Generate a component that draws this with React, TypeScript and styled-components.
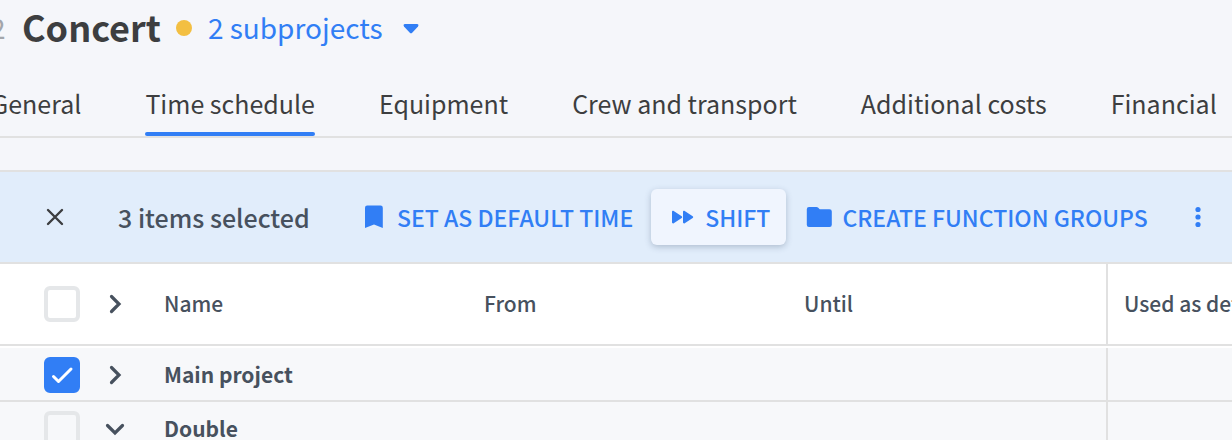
import React from "react";
import styled, { createGlobalStyle } from "styled-components";

const color = {
  page: "#f5f6fa",
  line: "#e1e1e1",
  ink: "#3d3e40",
  slate: "#47515e",
  blue: "#317ef5",
  bar: "#e1edfb",
  row: "#f7f8fa",
};

const GlobalStyle = createGlobalStyle`
  *, *::before, *::after { box-sizing: border-box; }
  body {
    margin: 0;
    background: ${color.page};
    color: ${color.ink};
    font-family: "Noto Sans CJK JP", "Noto Sans", sans-serif;
    -webkit-font-smoothing: antialiased;
  }
  button { font: inherit; color: inherit; background: none; border: 0; padding: 0; cursor: pointer; }
`;

const Page = styled.main`
  height: 100vh;
  overflow: hidden;
`;

const Header = styled.header`
  display: flex;
  align-items: center;
  height: 54px;
  margin-left: -10px;
  white-space: nowrap;
`;

const ProjectNumber = styled.span`
  width: 32px;
  font-size: 28px;
  line-height: 40px;
  color: #a3a6ab;
`;

const Title = styled.h1`
  margin: 0 0 2px;
  font-size: 36px;
  line-height: 48px;
  font-weight: 700;
`;

const StatusDot = styled.span`
  width: 16px;
  height: 16px;
  margin: 2px 16px 0 15px;
  border-radius: 50%;
  background: #f3bf42;
`;

const SubprojectsButton = styled.button`
  display: flex;
  align-items: center;
  gap: 20px;
  font-size: 28px;
  line-height: 40px;
  color: ${color.blue};

  svg { margin-top: 4px; }
`;

const Tabs = styled.nav`
  display: flex;
  gap: 64px;
  margin-left: -9px;
  padding-top: 32px;
  border-bottom: 2px solid ${color.line};
  white-space: nowrap;
`;

const Tab = styled.a<{ $active?: boolean }>`
  font-size: 25px;
  line-height: 34px;
  color: inherit;
  text-decoration: none;

  &::after {
    content: "";
    display: block;
    height: 4px;
    margin-top: 12px;
    border-radius: 2px;
    background: ${(p) => (p.$active ? color.blue : "transparent")};
  }
`;

const SelectionBar = styled.section`
  display: flex;
  align-items: center;
  height: 94px;
  margin-top: 32px;
  border: solid ${color.line};
  border-width: 2px 0;
  background: ${color.bar};
  white-space: nowrap;
`;

const CloseButton = styled.button`
  display: grid;
  place-items: center;
  width: 110px;
  height: 56px;
`;

const SelectedCount = styled.p`
  width: 225px;
  margin: 0 0 0 8px;
  font-size: 25px;
  line-height: 34px;
  font-weight: 500;
  color: ${color.slate};
`;

const Actions = styled.div`
  display: flex;
  align-items: center;
  gap: 2px;
`;

const ActionButton = styled.button<{ $raised?: boolean }>`
  display: flex;
  align-items: center;
  gap: 8px;
  height: 56px;
  && { padding: 0 16px; }
  border-radius: 6px;
  font-size: 23px;
  line-height: 34px;
  font-weight: 500;
  color: ${color.blue};
  ${(p) =>
    p.$raised &&
    `&& { background: #f0f5fe; }
     box-shadow: 0 2px 6px rgba(60, 80, 110, 0.3);`}
`;

const MoreButton = styled.button`
  display: grid;
  place-items: center;
  width: 64px;
  height: 56px;
  color: ${color.blue};
`;

const TableScroller = styled.div`
  overflow: hidden;
  background: #fff;
`;

const Table = styled.table`
  width: 100%;
  min-width: 1428px;
  table-layout: fixed;
  border-collapse: separate;
  border-spacing: 0;
  font-size: 21px;
  line-height: 32px;
  color: ${color.slate};
  text-align: left;
  white-space: nowrap;
`;

const Col = styled.col<{ $width?: number }>`
  width: ${(p) => (p.$width ? `${p.$width}px` : "auto")};
`;

const HeadCell = styled.th<{ $divider?: boolean }>`
  height: 82px;
  padding: 0 16px 2px;
  border-bottom: 2px solid ${color.line};
  border-right: ${(p) => (p.$divider ? `2px solid ${color.line}` : "0")};
  font-weight: 500;

  &:first-child { padding-bottom: 0; }
`;

const Cell = styled.td<{ $divider?: boolean }>`
  height: 54px;
  padding: 0 16px;
  background: ${color.row};
  border-bottom: 2px solid ${color.line};
  border-right: ${(p) => (p.$divider ? `2px solid ${color.line}` : "0")};
  font-weight: 700;

  &:first-child { padding-top: 2px; }
`;

const BodyRows = styled.tbody`
  &::before {
    content: "";
    display: table-row;
    height: 2px;
  }
`;

const RowControls = styled.div`
  display: flex;
  align-items: center;
  gap: 18px;
`;

const CheckLabel = styled.label`
  display: grid;
  width: 36px;
  height: 36px;
  margin-left: 28px;
  cursor: pointer;

  > * { grid-area: 1 / 1; }
  > svg { place-self: center; pointer-events: none; visibility: hidden; z-index: 1; }
  > input:checked + svg { visibility: visible; }
`;

const CheckInput = styled.input`
  appearance: none;
  width: 36px;
  height: 36px;
  margin: 0;
  border: 4px solid #e5e7e9;
  border-radius: 6px;

  &:checked { border-color: ${color.blue}; background: ${color.blue}; }
`;

const ExpandButton = styled.button`
  display: grid;
  place-items: center;
  width: 38px;
  height: 36px;
`;

const CheckCell = ({ label, checked }: { label: string; checked?: boolean }) => (
  <CheckLabel>
    <CheckInput type="checkbox" aria-label={label} defaultChecked={checked} />
    <svg width="36" height="36" viewBox="0 0 36 36" fill="none">
      <path d="M9.500 19.500l5 5L27 12" stroke="#fff" strokeWidth="3" strokeLinecap="round" strokeLinejoin="round" />
    </svg>
  </CheckLabel>
);

const Expander = ({ open, label }: { open?: boolean; label: string }) => (
  <ExpandButton aria-label={label} aria-expanded={!!open}>
    <svg width="24" height="24" viewBox="0 0 24 24" fill="none">
      <path
        d={open ? "M4.500 8.500l7.500 7.500 7.500-7.500" : "M8.500 4.500l7.500 7.500-7.500 7.500"}
        stroke="currentColor"
        strokeWidth="3.200"
        strokeLinecap="round"
      />
    </svg>
  </ExpandButton>
);

const CaretIcon = () => (
  <svg width="16" height="10" viewBox="0 0 16 10" fill="currentColor">
    <path d="M2 0h12c1.400 0 1.900 1.400 1 2.400L9.200 8.800c-.7.700-1.700.7-2.400 0L1 2.400C.1 1.400.6 0 2 0z" />
  </svg>
);

const CloseIcon = () => (
  <svg width="18" height="18" viewBox="0 0 18 18" fill="none">
    <path d="M2 2l14 14M16 2L2 16" stroke="currentColor" strokeWidth="2.400" strokeLinecap="round" />
  </svg>
);

const BookmarkIcon = () => (
  <svg width="30" height="30" viewBox="0 0 30 30" fill="currentColor">
    <path d="M6 5.800A2.200 2.200 0 0 1 8.200 3.600h13.400a2.200 2.200 0 0 1 2.200 2.200V26L15 22.400 6 26z" />
  </svg>
);

const ForwardIcon = () => (
  <svg width="30" height="30" viewBox="0 0 30 30" fill="currentColor">
    <path d="M5 9.800c0-1 .9-1.500 1.700-.9l8 5.300c.7.500.7 1.200 0 1.700l-8 5.300c-.8.500-1.700 0-1.700-.9zM16 9.800c0-1 .9-1.500 1.700-.9l8 5.300c.7.500.7 1.200 0 1.700l-8 5.300c-.8.500-1.700 0-1.700-.9z" />
  </svg>
);

const FolderIcon = () => (
  <svg width="30" height="30" viewBox="0 0 30 30" fill="currentColor">
    <path d="M2.800 7.200A2.200 2.200 0 0 1 5 5h7.500c.6 0 1.100.2 1.500.6L15.700 7.300h9.800a2.300 2.300 0 0 1 2.300 2.300v13.200a2.200 2.200 0 0 1-2.200 2.200H5a2.200 2.200 0 0 1-2.200-2.200z" />
  </svg>
);

const DotsIcon = () => (
  <svg width="8" height="22" viewBox="0 0 8 22" fill="currentColor">
    <circle cx="4" cy="3.500" r="2.600" />
    <circle cx="4" cy="11" r="2.600" />
    <circle cx="4" cy="18.500" r="2.600" />
  </svg>
);

const tabs = ["General", "Time schedule", "Equipment", "Crew and transport", "Additional costs", "Financial"];

const rows = [
  { name: "Main project", checked: true, open: false },
  { name: "Double", checked: false, open: true },
];

export default function App() {
  return (
    <Page>
      <GlobalStyle />
      <Header>
        <ProjectNumber>2</ProjectNumber>
        <Title>Concert</Title>
        <StatusDot />
        <SubprojectsButton>
          2 subprojects
          <CaretIcon />
        </SubprojectsButton>
      </Header>
      <Tabs>
        {tabs.map((name) => (
          <Tab key={name} href="#" $active={name === "Time schedule"}>
            {name}
          </Tab>
        ))}
      </Tabs>
      <SelectionBar>
        <CloseButton aria-label="Clear selection">
          <CloseIcon />
        </CloseButton>
        <SelectedCount>3 items selected</SelectedCount>
        <Actions>
          <ActionButton>
            <BookmarkIcon />
            SET AS DEFAULT TIME
          </ActionButton>
          <ActionButton $raised>
            <ForwardIcon />
            SHIFT
          </ActionButton>
          <ActionButton>
            <FolderIcon />
            CREATE FUNCTION GROUPS
          </ActionButton>
          <MoreButton aria-label="More actions">
            <DotsIcon />
          </MoreButton>
        </Actions>
      </SelectionBar>
      <TableScroller>
        <Table>
          <colgroup>
            <Col $width={148} />
            <Col $width={320} />
            <Col $width={320} />
            <Col $width={320} />
            <Col />
          </colgroup>
          <thead>
            <tr>
              <HeadCell>
                <RowControls>
                  <CheckCell label="Select all" />
                  <Expander label="Expand all" />
                </RowControls>
              </HeadCell>
              <HeadCell>Name</HeadCell>
              <HeadCell>From</HeadCell>
              <HeadCell $divider>Until</HeadCell>
              <HeadCell>Used as default</HeadCell>
            </tr>
          </thead>
          <BodyRows>
            {rows.map((row) => (
              <tr key={row.name}>
                <Cell>
                  <RowControls>
                    <CheckCell label={`Select ${row.name}`} checked={row.checked} />
                    <Expander label={`Toggle ${row.name}`} open={row.open} />
                  </RowControls>
                </Cell>
                <Cell>{row.name}</Cell>
                <Cell />
                <Cell $divider />
                <Cell />
              </tr>
            ))}
          </BodyRows>
        </Table>
      </TableScroller>
    </Page>
  );
}
